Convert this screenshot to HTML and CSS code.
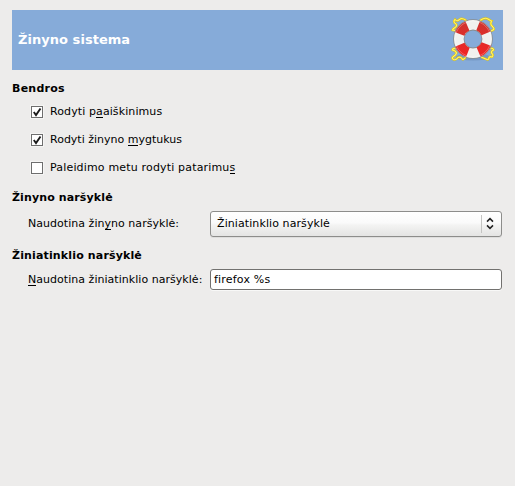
FILE: index.html
```html
<!DOCTYPE html>
<html lang="lt">
<head>
<meta charset="utf-8">
<title>Žinyno sistema</title>
<link rel="stylesheet" href="styles.css">
</head>
<body>
<main class="page">
  <header class="banner">
    <h1>Žinyno sistema</h1>
    <svg class="lifebuoy" viewBox="0 0 50 50" width="50" height="50">
      <defs>
        <linearGradient id="red" x1="0" y1="0" x2="0" y2="1">
          <stop offset="0" stop-color="#d2322e"/><stop offset="1" stop-color="#ee2525"/>
        </linearGradient>
        <path id="rope" d="M19 7Q14 3 11.500 5.500T7 5.500Q4.500 8 8 10Q9.500 12 7 13.500T4.500 16L9 17M32 6.500Q37 3 40 5T43.500 7Q42 10 44 12T46 15Q45 17 41 17M10 34Q4 34 4.500 36Q8 37 8.500 39Q8 41 5.500 42.500T5.500 45.500Q8 46.500 10 43.500Q12.500 42.500 14 44.500Q14.500 47 18 43M41 34Q46 34 45.500 36Q43 37 43.500 39Q46 41 44 43Q42 42 41 43.500Q41 46 39 45.500L33 43"/>
      </defs>
      <ellipse cx="25" cy="43" rx="17" ry="3.5" fill="#47658c" opacity=".25"/>
      <use href="#rope" class="rope-edge"/>
      <use href="#rope" class="rope-light"/>
      <circle cx="25" cy="25" r="14.2" fill="none" stroke="#888c8d" stroke-width="11.2"/>
      <circle cx="25" cy="25" r="14.2" fill="none" stroke="#f1f1ef" stroke-width="9.6"/>
      <circle cx="25" cy="25" r="14.2" fill="none" stroke="url(#red)" stroke-width="9.8" pathLength="360" stroke-dasharray="46 44" stroke-dashoffset="-21"/>
      <circle cx="25" cy="25" r="17.9" fill="none" stroke="#fff" stroke-width="1" opacity=".25"/>
    </svg>
  </header>

  <section class="group">
    <h2 class="t-general">Bendros</h2>
    <div class="check"><span class="box"><svg viewBox="0 0 12 12"><path d="M2.800 6L5 9L9.500 2.500"/></svg></span><span class="t-tips">Rodyti p<u>a</u>aiškinimus</span></div>
    <div class="check"><span class="box"><svg viewBox="0 0 12 12"><path d="M2.800 6L5 9L9.500 2.500"/></svg></span><span>Rodyti žinyno <u>m</u>ygtukus</span></div>
    <div class="check"><span class="box"></span><span class="t-startup">Paleidimo metu rodyti patarimu<u>s</u></span></div>
  </section>

  <section class="group help">
    <h2 class="t-help">Žinyno naršyklė</h2>
    <div class="field">
      <span class="label">Naudotina žin<u>y</u>no naršyklė:</span>
      <div class="combo">
        <span class="t-combo">Žiniatinklio naršyklė</span>
        <svg class="arrows" viewBox="0 0 20 18"><path class="divider" d="M.5 0V18"/><path class="chevrons" d="M6 6.600L9 3.600L12 6.600M6 10.400L9 13.400L12 10.400"/></svg>
      </div>
    </div>
  </section>

  <section class="group web">
    <h2 class="t-web">Žiniatinklio naršyklė</h2>
    <div class="field">
      <span class="label"><u>N</u>audotina žiniatinklio naršyklė:</span>
      <div class="entry">firefox %s</div>
    </div>
  </section>
</main>
</body>
</html>
```
FILE: styles.css
```css
* { box-sizing: border-box; }
body {
  margin: 0;
  background: #edeceb;
  color: #000;
  font: 11px/14px "DejaVu Sans", sans-serif;
  font-variant-ligatures: none;
}
.page { height: 486px; padding: 10px 12px; overflow: hidden; }
.banner {
  display: flex;
  align-items: center;
  justify-content: space-between;
  height: 60px;
  padding: 0 5px 0 6px;
  background: #86abd9;
  color: #fff;
}
h1 { margin: 0; font-size: 13px; line-height: 18px; letter-spacing: .04px; }
h2 { margin: 0; font-size: 11px; line-height: 14px; }
.lifebuoy { margin-top: -2px; }
.rope-edge { fill: none; stroke: #e2c505; stroke-width: 2.2; }
.rope-light { fill: none; stroke: #fff16b; stroke-width: 1.1; }
.group { padding-top: 12px; }
.check {
  display: flex;
  align-items: center;
  gap: 7px;
  height: 28px;
  padding-left: 19px;
}
.group h2 + .check { margin-top: 2px; }
.box {
  width: 12px;
  height: 12px;
  border: 1px solid #6e6e6e;
  background: #fff;
  box-shadow: 0 0 0 1px #f5f5f4;
}
.check > span:last-child { padding-bottom: 1px; }
.box svg { display: block; width: 12px; height: 12px; margin: -1px; }
.box path { fill: none; stroke: #1b1b1b; stroke-width: 1.9; }
u { text-decoration: none; box-shadow: 0 1px 0 #000; display: inline-block; height: 12px; line-height: 14px; }
.t-general { letter-spacing: .25px; }
.t-tips { letter-spacing: .1px; }
.t-startup { letter-spacing: .17px; }
.t-help { letter-spacing: .12px; }
.t-web { letter-spacing: .15px; }
.t-combo { letter-spacing: .09px; }
.help { padding-top: 9px; }
.web { padding-top: 12px; }
.field { display: flex; align-items: center; padding-left: 16px; }
.label { width: 182px; white-space: nowrap; letter-spacing: .035px; }
.combo {
  display: flex;
  align-items: center;
  justify-content: space-between;
  width: 292px;
  height: 26px;
  padding-left: 6px;
  border: 1px solid #8d8d8b;
  border-radius: 3px;
  background: linear-gradient(#fff, #fafafa 45%, #f3f3f2 55%, #e4e4e3);
  box-shadow: 0 1px 0 #dededd;
}
.help .field { margin-top: 6px; }
.arrows { width: 20px; height: 18px; }
.divider { stroke: #c4c4c2; }
.chevrons { fill: none; stroke: #222; stroke-width: 1.5; }
.web .field { margin-top: 6px; }
.entry {
  width: 292px;
  height: 21px;
  padding: 2px 3px;
  border: 1px solid #72716f;
  border-radius: 3px;
  background: #fff;
  box-shadow: 0 1px 0 #f8f8f7;
  line-height: 16px;
  letter-spacing: .2px;
}
```
